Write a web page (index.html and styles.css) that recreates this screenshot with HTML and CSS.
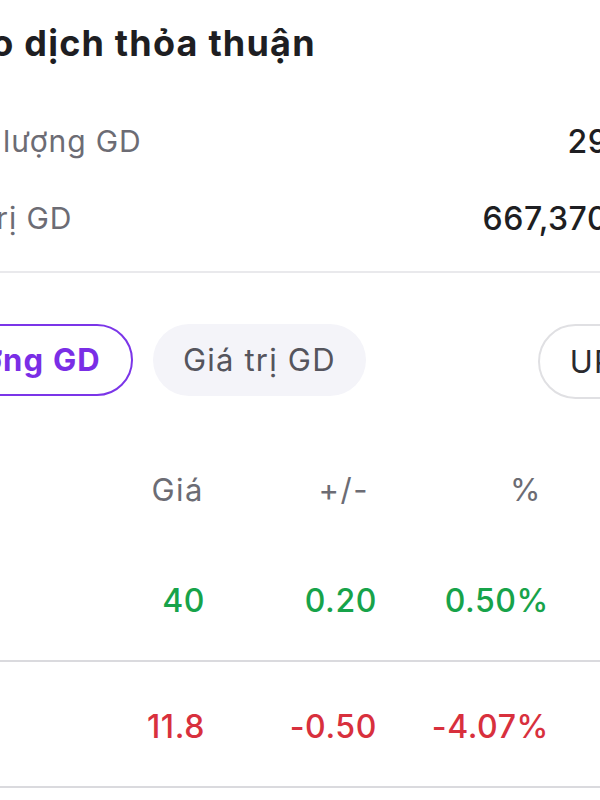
FILE: index.html
```html
<html>

<head>
    <meta charset="utf-8">
    <link rel="stylesheet" href="styles.css">
</head>

<body>
    <div class="screen">
        <h1 class="title">Giao dịch thỏa thuận</h1>

        <div class="summary">
            <div class="summaryRow">
                <span class="label">Khối lượng GD</span>
                <span class="value">29,500</span>
            </div>
            <div class="summaryRow">
                <span class="label">Giá trị GD</span>
                <span class="value">667,370,000</span>
            </div>
        </div>

        <div class="filters">
            <div class="chips">
                <button class="chip active">Khối lượng GD</button>
                <button class="chip">Giá trị GD</button>
            </div>
            <button class="chip outline">UPCOM</button>
        </div>

        <div class="table">
            <div class="row head">
                <span class="cell sym">Mã</span>
                <span class="cell">Giá</span>
                <span class="cell">+/-</span>
                <span class="cell">%</span>
            </div>
            <div class="row up">
                <span class="cell sym"></span>
                <span class="cell">40</span>
                <span class="cell">0.20</span>
                <span class="cell">0.50%</span>
            </div>
            <div class="row down">
                <span class="cell sym"></span>
                <span class="cell">11.8</span>
                <span class="cell">-0.50</span>
                <span class="cell">-4.07%</span>
            </div>
        </div>
    </div>
</body>

</html>
```

FILE: styles.css
```css
body {
    margin: 0;
    overflow: hidden;
    background: #FFFFFF;
    font-family: Inter, "Noto Sans", sans-serif;
    color: #1C1C1E;
}

.screen {
    width: 731px;
    margin-left: -65px;
}

.title {
    margin: 0 0 0 -5px;
    padding-top: 18px;
    font-size: 36px;
    line-height: 50px;
    letter-spacing: 1.2px;
    font-weight: 700;
    color: #1E1E22;
}

.summary {
    margin-top: 35px;
    margin-right: -14px;
    padding-bottom: 14px;
    border-bottom: 2px solid #E9E9EC;
}

.summaryRow {
    display: flex;
    justify-content: space-between;
    height: 77px;
    line-height: 77px;
    font-size: 30px;
}

.label {
    margin-left: -8px;
    letter-spacing: 0.9px;
    color: #6C6C74;
}

.value {
    font-size: 32px;
    letter-spacing: 0.5px;
    font-weight: 500;
    color: #1E1E22;
}

.filters {
    display: flex;
    align-items: center;
    margin-top: 47px;
    margin-right: -59px;
}

.chips {
    display: flex;
    gap: 20px;
    margin-left: -96px;
}

.chip {
    height: 72px;
    padding: 0 28px;
    border-radius: 36px;
    border: 2px solid transparent;
    background: #F4F4F9;
    font-family: inherit;
    font-size: 31px;
    letter-spacing: 1.2px;
    color: #55555D;
    white-space: nowrap;
}

.chip.active {
    padding: 0 30px;
    background: #FFFFFF;
    border-color: #7B35E8;
    color: #7A2EE6;
    font-weight: 700;
}

.chip.outline {
    height: 75px;
    margin-left: auto;
    margin-top: 4px;
    padding: 0 30px;
    border-radius: 38px;
    background: #FFFFFF;
    border-color: #E0E0E3;
    color: #2A2A2E;
}

.table {
    margin-top: 57px;
}

.row {
    display: grid;
    grid-template-columns: 98px 172px 172px 172px;
    height: 118px;
    padding-top: 6px;
    line-height: 118px;
    font-size: 32px;
    letter-spacing: 0.6px;
    font-weight: 500;
    border-bottom: 2px solid #DADADE;
}

.cell {
    text-align: right;
}

.row.head {
    height: 80px;
    padding-top: 0;
    line-height: 68px;
    font-size: 31px;
    letter-spacing: 1.5px;
    font-weight: 400;
    color: #6C6C74;
    border-bottom: none;
}

.row.head .cell:nth-child(2) {
    padding-right: 1px;
}

.row.head .cell:nth-child(3) {
    padding-right: 8px;
}

.row.head .cell:nth-child(4) {
    padding-right: 7px;
}

.row.head .sym {
    visibility: hidden;
}

.up {
    color: #17A34A;
}

.down {
    color: #D8303D;
}
```
